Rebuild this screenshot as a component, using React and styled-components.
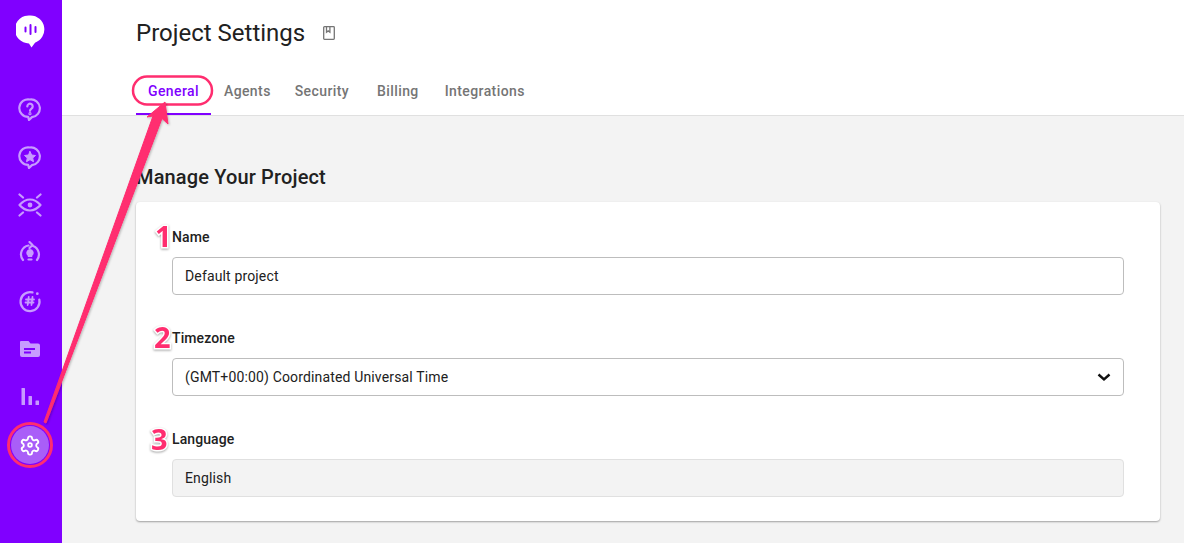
import React from 'react';
import styled, { createGlobalStyle } from 'styled-components';

const Global = createGlobalStyle`
  html, body { margin: 0; padding: 0; height: 100%; overflow: hidden; background: #f3f3f3; }
  body { font-family: Roboto, "Liberation Sans", sans-serif; }
  * { box-sizing: border-box; }
`;
const Page = styled.div`position: relative; display: flex; width: 1184px; height: 543px; overflow: hidden;`;
const Rail = styled.nav`
  width: 62px; flex: none; background: #8000ff; display: flex; flex-direction: column; align-items: center;
  padding: 15px 2px 0 0;
`;
const Logo = styled.div`height: 33px; margin-bottom: 37px; display: flex;`;
const NavList = styled.div`display: flex; flex-direction: column; align-items: center;`;
const NavItem = styled.div`
  width: 34px; height: 48px; display: flex; align-items: center; justify-content: center; color: #c79bff;
`;
const ActiveItem = styled.div`
  width: 38px; height: 38px; margin-top: 5px; border-radius: 50%; background: #a95ef8; color: #fff;
  display: flex; align-items: center; justify-content: center;
`;
const Main = styled.main`flex: 1; display: flex; flex-direction: column; min-width: 0;`;
const Header = styled.header`
  height: 116px; background: #fff; border-bottom: 1px solid #e0e0e0; padding: 17px 0 0 74px;
  display: flex; flex-direction: column;
`;
const TitleRow = styled.div`display: flex; align-items: center; gap: 17px; height: 32px;`;
const Title = styled.h1`margin: 0; font-size: 24px; font-weight: 400; color: #212121; line-height: 32px;`;
const Tabs = styled.div`display: flex; margin-top: 17px; height: 49px;`;
const Tab = styled.div`
  padding: 2px 12px 0; height: 49px; line-height: 47px; font-size: 14px; font-weight: 500; letter-spacing: 0.4px;
  margin-right: ${p => p.$gap || 0}px;
  color: ${p => (p.$active ? '#8000ff' : '#757575')};
  border-bottom: 2px solid ${p => (p.$active ? '#8000ff' : 'transparent')};
`;
const Content = styled.div`padding: 48px 24px 0 74px;`;
const SectionTitle = styled.h2`margin: 0 0 11px 0; font-size: 20px; font-weight: 500; line-height: 27px; color: #212121; letter-spacing: 0.15px;`;
const Card = styled.section`
  width: 1024px; height: 319px; background: #fff; border-radius: 4px; padding: 25px 36px 0;
  box-shadow: 0 1px 2px rgba(0,0,0,.35); display: flex; flex-direction: column; gap: 33px;
`;
const Field = styled.div`display: flex; flex-direction: column;`;
const Label = styled.label`font-size: 14px; font-weight: 500; line-height: 20px; color: #212121; margin-bottom: 10px; letter-spacing: .1px;`;
const Input = styled.div`
  height: 38px; border: 1px solid ${p => (p.$disabled ? '#e0e0e0' : '#bdbdbd')}; border-radius: 4px;
  background: ${p => (p.$disabled ? '#f3f3f3' : '#fff')}; padding: 0 12px; display: flex; align-items: center;
  justify-content: space-between; font-size: 14px; letter-spacing: .15px; color: #212121;
`;
const Overlay = styled.svg`position: absolute; inset: 0; pointer-events: none;`;
const Num = styled.span`
  position: absolute; left: ${p => p.$x}px; top: ${p => p.$y}px; font-family: "Noto Sans", sans-serif; font-weight: 700;
  font-size: 29px; line-height: 29px; color: #ff2d6f; -webkit-text-stroke: 3px #fff; paint-order: stroke fill;
  filter: drop-shadow(0 1px 1px rgba(0,0,0,.35));
`;

const Icon = ({ children, size = 24, sw = 2.2 }) => (
  <svg width={size} height={size} viewBox="0 0 24 24" fill="none" stroke="currentColor" strokeWidth={sw} strokeLinecap="round" strokeLinejoin="round">{children}</svg>
);
const bubble = 'M12 2.500a8.800 8.800 0 1 0 -1.800 17.400 L11 23 L14 20.100 A8.800 8.800 0 0 0 12 2.500Z';

export default function App() {
  return (
    <Page>
      <Global />
      <Rail>
        <Logo>
          <svg width="29" height="33" viewBox="0 0 29 33">
            <path d="M14.500 0.500a14 14 0 1 0 -1.500 27.900 L15.500 32.500 L19 27.700 A14 14 0 0 0 14.500 0.500Z" fill="#fff" />
            <path d="M9.500 12.500v4M14.500 10v9M19.500 12v5" stroke="#8000ff" strokeWidth="2" strokeLinecap="round" />
          </svg>
        </Logo>
        <NavList>
          <NavItem>
            <Icon>
              <path d={bubble} />
              <path d="M9.300 9.500a2.700 2.700 0 1 1 4.200 2.200c-1 .7-1.500 1.100-1.500 2.100" />
              <circle cx="12" cy="16.700" r=".5" fill="currentColor" />
            </Icon>
          </NavItem>
          <NavItem>
            <Icon>
              <path d={bubble} />
              <path d="M12 6.500l1.700 3.500 3.800.5-2.800 2.500.8 3.700-3.500-2-3.500 2 .8-3.700-2.800-2.500 3.800-.5z" fill="currentColor" strokeWidth="1" />
            </Icon>
          </NavItem>
          <NavItem>
            <Icon>
              <path d="M1.500 12C5 8 8.500 6.500 12 6.500s7 1.500 10.500 5.500c-3.500 4-7 5.500-10.500 5.500S5 16 1.500 12z" />
              <circle cx="12" cy="12" r="2.400" fill="currentColor" stroke="none" />
              <path d="M1.500 1.500l3.500 3M22.500 1.500l-3.500 3M1.500 22.500l3.500-3M22.500 22.500l-3.500-3" />
            </Icon>
          </NavItem>
          <NavItem>
            <Icon>
              <path d="M5 19a9 9 0 0 1 5.500-14.500M15 5a9 9 0 0 1 4 14" />
              <path d="M11.500 1l3 3-3 3" />
              <path d="M12 8a3.800 3.800 0 0 1 2.200 6.800V16h-4.400v-1.200A3.800 3.800 0 0 1 12 8z" fill="currentColor" stroke="none" />
              <path d="M10.500 18.500h3" />
            </Icon>
          </NavItem>
          <NavItem>
            <Icon>
              <path d="M14.500 3.400A9.500 9.500 0 1 0 21.300 10.500" />
              <circle cx="19.300" cy="4.700" r="1.400" fill="currentColor" stroke="none" />
              <path d="M10.700 8l-1 8M14.500 8l-1 8M8 10.500h8M7.500 13.500h8" strokeWidth="1.800" />
            </Icon>
          </NavItem>
          <NavItem>
            <svg width="24" height="24" viewBox="0 0 24 24">
              <path d="M3 4h7.500l2 2.500H20a2 2 0 0 1 2 2V18a2 2 0 0 1-2 2H4a2 2 0 0 1-2-2V5a1 1 0 0 1 1-1z" fill="currentColor" />
              <path d="M6 11h11v2H6zM6 14.500h7v2H6z" fill="#8000ff" />
            </svg>
          </NavItem>
          <NavItem>
            <svg width="24" height="24" viewBox="0 0 24 24" fill="currentColor">
              <rect x="3.500" y="3" width="3.500" height="17" rx=".5" />
              <rect x="10.500" y="11" width="3.500" height="9" rx=".5" />
              <rect x="17.500" y="15.500" width="3.500" height="4.500" rx=".5" />
            </svg>
          </NavItem>
          <ActiveItem>
            <Icon size={22} sw={2}>
              <path d="M12.200 2.500h-.4a2 2 0 0 0-2 2v.2a2 2 0 0 1-1 1.700l-.4.300a2 2 0 0 1-2 0l-.2-.1a2 2 0 0 0-2.700.7l-.2.400a2 2 0 0 0 .7 2.700l.2.100a2 2 0 0 1 1 1.700v.6a2 2 0 0 1-1 1.700l-.2.100a2 2 0 0 0-.7 2.700l.2.400a2 2 0 0 0 2.700.7l.2-.1a2 2 0 0 1 2 0l.4.300a2 2 0 0 1 1 1.700v.2a2 2 0 0 0 2 2h.4a2 2 0 0 0 2-2v-.2a2 2 0 0 1 1-1.700l.4-.3a2 2 0 0 1 2 0l.2.100a2 2 0 0 0 2.700-.7l.2-.4a2 2 0 0 0-.7-2.700l-.2-.1a2 2 0 0 1-1-1.700v-.6a2 2 0 0 1 1-1.700l.2-.1a2 2 0 0 0 .7-2.700l-.2-.4a2 2 0 0 0-2.700-.7l-.2.100a2 2 0 0 1-2 0l-.4-.3a2 2 0 0 1-1-1.700v-.2a2 2 0 0 0-2-2z" />
              <circle cx="12" cy="12" r="2" />
            </Icon>
          </ActiveItem>
        </NavList>
      </Rail>
      <Main>
        <Header>
          <TitleRow>
            <Title>Project Settings</Title>
            <svg width="14" height="16" viewBox="0 0 14 16" fill="none" stroke="#757575" strokeWidth="1.300">
              <rect x="1.700" y="1.700" width="10.600" height="12.600" rx=".8" />
              <path d="M4.500 1.700v5.500l1.700-1.300 1.700 1.300V1.700" />
            </svg>
          </TitleRow>
          <Tabs>
            <Tab $active $gap={1}>General</Tab>
            <Tab>Agents</Tab>
            <Tab $gap={4}>Security</Tab>
            <Tab $gap={2}>Billing</Tab>
            <Tab>Integrations</Tab>
          </Tabs>
        </Header>
        <Content>
          <SectionTitle>Manage Your Project</SectionTitle>
          <Card>
            <Field>
              <Label>Name</Label>
              <Input>Default project</Input>
            </Field>
            <Field>
              <Label>Timezone</Label>
              <Input>
                (GMT+00:00) Coordinated Universal Time
                <svg width="14" height="10" viewBox="0 0 14 10" fill="none" stroke="#111" strokeWidth="2.400">
                  <path d="M1.500 2.500L7 7.500l5.500-5" />
                </svg>
              </Input>
            </Field>
            <Field>
              <Label>Language</Label>
              <Input $disabled>English</Input>
            </Field>
          </Card>
        </Content>
      </Main>
      <Overlay width="1184" height="543" viewBox="0 0 1184 543">
        <defs>
          <filter id="s" x="-10%" y="-10%" width="120%" height="120%">
            <feDropShadow dx="1" dy="1" stdDeviation="1" floodColor="#000" floodOpacity=".25" />
          </filter>
        </defs>
        <circle cx="30" cy="445" r="21.500" fill="none" stroke="#ff2d6f" strokeWidth="3" />
        <rect x="133" y="76.500" width="79" height="28" rx="14" fill="none" stroke="#ff2d6f" strokeWidth="2.500" />
        <path d="M44 422 L153 116 L147 117 L165 102 L168 124 L162 118.500 L46 423 Z" fill="#ff2d6f" stroke="#ff2d6f" strokeLinejoin="round" filter="url(#s)" />
      </Overlay>
      <Num $x={155} $y={221}>1</Num>
      <Num $x={154} $y={322}>2</Num>
      <Num $x={151} $y={424}>3</Num>
    </Page>
  );
}
